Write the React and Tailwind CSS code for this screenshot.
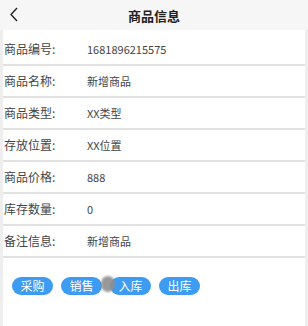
import React from "react";

const fields = [
  { label: "商品编号:", value: "1681896215575" },
  { label: "商品名称:", value: "新增商品" },
  { label: "商品类型:", value: "XX类型" },
  { label: "存放位置:", value: "XX位置" },
  { label: "商品价格:", value: "888" },
  { label: "库存数量:", value: "0" },
  { label: "备注信息:", value: "新增商品" },
];

const actions = ["采购", "销售", "入库", "出库"];

export default function App() {
  return (
    <div
      className="w-[308px] h-[326px] bg-[#eeeeee] overflow-hidden flex flex-col text-[#444]"
      style={{ fontFamily: '"Noto Sans CJK SC", "Noto Sans", sans-serif' }}
    >
      <header className="h-[30px] shrink-0 bg-[#f6f6f6] flex items-center relative">
        <svg className="absolute left-[9px] top-[7px]" width="10" height="15" viewBox="0 0 10 15">
          <path d="M8 1 L2 7.5 L8 14" fill="none" stroke="#222" strokeWidth="1.4" />
        </svg>
        <h1 className="w-full text-center text-[13px] font-bold leading-none text-[#222]">商品信息</h1>
      </header>

      <main className="mx-[3px] flex-1 bg-white pt-1 relative">
        {fields.map((f) => (
          <div key={f.label} className="h-[32px] flex items-center border-b-2 border-[#e2e2e2]">
            <span className="w-[84px] pl-[1px] text-[12px] leading-none">{f.label}</span>
            <span className="text-[11px] leading-none">{f.value}</span>
          </div>
        ))}

        <div className="flex gap-[8px] pl-[9px] mt-[19px]">
          {actions.map((a) => (
            <button
              key={a}
              className="w-[41px] h-[18px] rounded-full bg-[#3d9bf2] text-white text-[12px] leading-none flex items-center justify-center"
            >
              {a}
            </button>
          ))}
        </div>

        <div className="absolute left-[98px] top-[246px] w-[14px] h-[16px] rounded-full bg-[#8f8f8f] opacity-90 blur-[1px]" />
      </main>
    </div>
  );
}
